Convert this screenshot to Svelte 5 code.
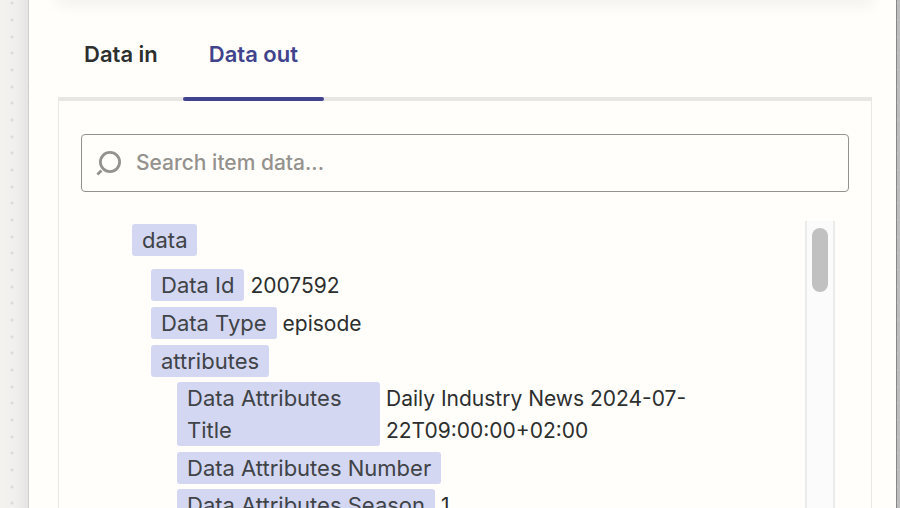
<script>
	let tabs = ['Data in', 'Data out']
	let active = $state('Data out')
	let query = $state('')

	const fields = [
		{ name: 'data', level: 0 },
		{ name: 'Data Id', value: '2007592', level: 1 },
		{ name: 'Data Type', value: 'episode', level: 1 },
		{ name: 'attributes', level: 1 },
		{
			name: 'Data Attributes Title',
			value: 'Daily Industry News 2024-07-22T09:00:00+02:00',
			level: 2,
			long: true
		},
		{ name: 'Data Attributes Number', level: 2 },
		{ name: 'Data Attributes Season', value: '1', level: 2 }
	]
</script>

<div class="canvas">
	<main class="drawer">
		<div class="card-edge"></div>
		<div class="tabs" role="tablist">
			{#each tabs as tab}
				<button
					class="tab"
					class:active={tab === active}
					role="tab"
					aria-selected={tab === active}
					onclick={() => (active = tab)}>{tab}</button
				>
			{/each}
		</div>

		<section class="panel">
			<label class="search">
				<svg viewBox="0 0 28 28" aria-hidden="true">
					<circle cx="15" cy="13" r="9.6" />
					<path d="M6.4 21.6 L2.4 25.6" />
				</svg>
				<input
					type="text"
					placeholder="Search item data..."
					aria-label="Search item data"
					bind:value={query}
				/>
			</label>

			<div class="results">
				<ul>
					{#each fields as field}
						<li class="level-{field.level}" class:long={field.long}>
							<span class="tag">{field.name}</span>
							{#if field.value}
								<span class="value">{field.value}</span>
							{/if}
						</li>
					{/each}
				</ul>
				<div class="track">
					<div class="thumb"></div>
				</div>
			</div>
		</section>
	</main>
</div>

<style>
	:global(body) {
		background: #f5f4f2;
		font-family: Inter, 'Liberation Sans', sans-serif;
	}
	.canvas {
		display: flex;
		box-sizing: border-box;
		height: 100vh;
		overflow: hidden;
		padding: 0 3px 0 28px;
		/* dot grid, three rows per 50px tile */
		background:
			radial-gradient(circle at 9px 3px, #dddcda 1px, transparent 2px) 3px 0 / 17px 50px,
			radial-gradient(circle at 9px 20px, #dddcda 1px, transparent 2px) 3px 0 / 17px 50px,
			radial-gradient(circle at 9px 37px, #dddcda 1px, transparent 2px) 3px 0 / 17px 50px,
			linear-gradient(to right, #f4f3f0, #f0efed 16px, #e6e5e3 28px, #bdbdbd 29px);
	}
	.drawer {
		display: flex;
		flex-direction: column;
		flex: 1;
		min-width: 0;
		padding: 0 24px 0 29px;
		border-left: 1px solid #d0cfcd;
		border-right: 1px solid #858585;
		background: #fffefb;
	}
	.card-edge {
		height: 0;
		box-shadow: 0 0 14px 1px rgba(0, 0, 0, 0.3);
	}
	.tabs {
		display: flex;
		flex: none;
		height: 101px;
		box-shadow: inset 0 -4px #e8e7e4;
	}
	.tab {
		position: relative;
		padding: 6px 26px 0;
		border: 0;
		background: none;
		color: #2d2e2e;
		font: 600 22px/32px Inter, 'Liberation Sans', sans-serif;
		cursor: pointer;
	}
	.tab:first-child {
		padding-right: 25px;
	}
	.tab.active {
		color: #41438c;
	}
	.tab.active::after {
		content: '';
		position: absolute;
		left: 0;
		right: 0;
		bottom: 0;
		height: 4px;
		border-radius: 2px;
		background: #41438c;
	}
	.panel {
		display: flex;
		flex-direction: column;
		flex: 1;
		min-height: 0;
		padding: 33px 22px 0;
		border: solid #e8e7e4;
		border-width: 0 1px;
	}
	.search {
		display: flex;
		align-items: center;
		flex: none;
		gap: 13px;
		box-sizing: border-box;
		height: 58px;
		padding: 0 13px;
		border: 1px solid #95928e;
		border-radius: 4px;
	}
	.search svg {
		width: 28px;
		height: 28px;
		fill: none;
		stroke: #95928e;
		stroke-width: 2.8;
	}
	.search input {
		flex: 1;
		min-width: 0;
		padding: 0;
		border: 0;
		outline: 0;
		background: none;
		color: #2d2e2e;
		font: 500 21px/32px Inter, 'Liberation Sans', sans-serif;
	}
	.search input::placeholder {
		color: #95928e;
		opacity: 1;
	}
	.results {
		display: flex;
		flex: 1;
		min-height: 0;
		margin-top: 29px;
		padding: 0 14px 0 51px;
	}
	ul {
		flex: 1;
		min-width: 0;
		margin: 0;
		padding: 3px 0 0;
		overflow: hidden;
		list-style: none;
		color: #2d2e2e;
		font-size: 22px;
		line-height: 32px;
	}
	li {
		display: flex;
		align-items: baseline;
		gap: 6px;
		margin-bottom: 5px;
	}
	.level-0 {
		margin-bottom: 13px;
	}
	.level-1 {
		padding-left: 19px;
	}
	.level-2 {
		padding-left: 45px;
	}
	.tag {
		flex: none;
		box-sizing: border-box;
		padding: 0 10px;
		border-radius: 3px;
		background: #d4d7f1;
		color: #404347;
	}
	.long .tag {
		width: 203px;
	}
	.value {
		font-size: 21px;
	}
	.track {
		box-sizing: border-box;
		width: 30px;
		padding: 7px 5px;
		border: solid #ebebeb;
		border-width: 0 2px;
		background: #fbfbfc;
	}
	.thumb {
		height: 64px;
		border-radius: 8px;
		background: #c1c1c1;
	}
</style>
